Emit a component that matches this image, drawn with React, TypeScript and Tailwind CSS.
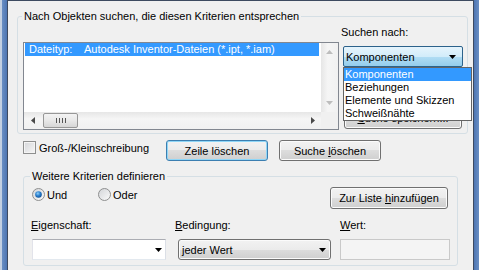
import type { ReactNode } from "react";
import clsx from "clsx";

type Dir = "up" | "down" | "left" | "right";

function Tri({ dir, color = "#000" }: { dir: Dir; color?: string }) {
  const vertical = dir === "up" || dir === "down";
  const w = vertical ? 7 : 4;
  const h = vertical ? 4 : 7;
  const points: Record<Dir, string> = {
    down: "0,0 7,0 3.5,4",
    up: "0,4 7,4 3.5,0",
    left: "4,0 4,7 0,3.5",
    right: "0,0 0,7 4,3.5",
  };
  return (
    <svg width={w} height={h} viewBox={`0 0 ${w} ${h}`} className="block">
      <polygon points={points[dir]} fill={color} />
    </svg>
  );
}

function Radio({ checked }: { checked?: boolean }) {
  return (
    <svg width="13" height="13" viewBox="0 0 13 13" className="block shrink-0">
      <defs>
        <linearGradient id="rb" x1="0" y1="0" x2="1" y2="1">
          <stop offset="0" stopColor="#d2d4d7" />
          <stop offset="1" stopColor="#fbfbfb" />
        </linearGradient>
        <radialGradient id="rd" cx="0.4" cy="0.35" r="0.7">
          <stop offset="0" stopColor="#8fd0f8" />
          <stop offset="0.5" stopColor="#2a7fcf" />
          <stop offset="1" stopColor="#0f4f93" />
        </radialGradient>
      </defs>
      <circle cx="6.5" cy="6.5" r="6" fill="url(#rb)" stroke="#8e8f8f" />
      {checked && <circle cx="6.5" cy="6.5" r="3.3" fill="url(#rd)" />}
    </svg>
  );
}

function Btn({
  children,
  className,
  focused,
}: {
  children: ReactNode;
  className?: string;
  focused?: boolean;
}) {
  return (
    <div
      className={clsx(
        "flex items-center justify-center rounded-[3px] border leading-[16px] text-black",
        "bg-[linear-gradient(to_bottom,#f2f2f2_0%,#ebebeb_50%,#dddddd_50%,#cfcfcf_100%)]",
        focused
          ? "border-[#3c7fb1] shadow-[inset_0_0_0_1px_#8fd6f7]"
          : "border-[#707070] shadow-[inset_0_0_0_1px_#fbfbfb]",
        className
      )}
    >
      {children}
    </div>
  );
}

function ListBox() {
  return (
    <div className="grid h-[88px] w-[316px] grid-cols-[297px_17px] grid-rows-[69px_17px] border border-[#828790] bg-white">
      <div className="pt-0 pl-[1px]">
        <div className="flex h-[13px] w-[294px] items-center bg-[#3399ff] pl-[4px] leading-[13px] text-white">
          <span className="w-[55px]">Dateityp:</span>
          <span>Autodesk Inventor-Dateien (*.ipt, *.iam)</span>
        </div>
      </div>
      <div className="flex flex-col items-center justify-between bg-[linear-gradient(to_right,#e6e6e6,#f5f5f5_40%,#f1f1f1)] py-[7px]">
        <Tri dir="up" color="#bdbdbd" />
        <Tri dir="down" color="#bdbdbd" />
      </div>
      <div className="flex items-center bg-[linear-gradient(to_bottom,#e6e6e6,#f5f5f5_40%,#f1f1f1)]">
        <div className="flex w-[17px] justify-center">
          <Tri dir="left" color="#4a4a4a" />
        </div>
        <div className="ml-[2px] flex h-[15px] w-[35px] items-center justify-center gap-[2px] rounded-[2px] border border-[#979797] bg-[linear-gradient(to_bottom,#f3f3f3,#e8e8e8_50%,#d6d6d6)]">
          <span className="h-[5px] w-px bg-[#555]" />
          <span className="h-[5px] w-px bg-[#555]" />
          <span className="h-[5px] w-px bg-[#555]" />
          <span className="h-[5px] w-px bg-[#555]" />
        </div>
        <div className="flex-1" />
        <div className="flex w-[17px] justify-center">
          <Tri dir="right" color="#4a4a4a" />
        </div>
      </div>
      <div className="bg-[#f0f0f0]" />
    </div>
  );
}

export default function App() {
  return (
    <div className="flex h-[270px] w-[479px] overflow-hidden bg-[#f0f0f0] text-[11px] text-black font-['Liberation_Sans',Arial,sans-serif]">
      <div className="w-[2px] bg-[#c3d0e2]" />
      <div className="w-[5px] bg-[linear-gradient(to_right,#6a8fc4,#4d75b2)]" />
      <div className="w-px bg-[#3d4a60]" />

      <div className="relative flex-1 border-t border-[#3d4a60]">
        <fieldset className="ml-[9px] mt-[7px] w-[451px] rounded-[3px] border border-[#d5dfe5] pb-[3px]">
          <legend className="ml-[4px] px-[2px] leading-[16px]">
            Nach Objekten suchen, die diesen Kriterien entsprechen
          </legend>
          <div className="flex">
            <div className="ml-[5px] mt-[18px]">
              <ListBox />
            </div>
            <div className="ml-[2px] flex flex-col">
              <div className="leading-[16px]">Suchen nach:</div>
              <div className="ml-[2px] mt-[6px] flex h-[21px] w-[120px] items-center justify-between rounded-[2px] border border-[#2c628b] bg-[linear-gradient(to_bottom,#e6f4fc_0%,#d2ecfa_50%,#b2ddf4_50%,#94cdec_100%)] pl-[2px] pr-[6px] leading-[16px]">
                <span>Komponenten</span>
                <Tri dir="down" />
              </div>
              <Btn className="ml-[3px] mt-[40px] h-[22px] w-[118px]">
                <span>
                  <span className="underline">S</span>uche speichern...
                </span>
              </Btn>
            </div>
          </div>
        </fieldset>

        <div className="mt-[6px] flex items-start">
          <div className="ml-[15px] flex w-[143px] items-start">
            <div className="mt-[1px] h-[13px] w-[13px] shrink-0 border border-[#8e8f8f] bg-[linear-gradient(135deg,#d4d6d9,#f7f7f7)] shadow-[inset_0_0_0_1px_#f4f4f4]" />
            <span className="ml-[3px] leading-[16px]">Groß-/Kleinschreibung</span>
          </div>
          <Btn focused className="h-[21px] w-[102px]">
            Zeile löschen
          </Btn>
          <Btn className="ml-[11px] h-[21px] w-[102px]">
            <span>
              Suche <span className="underline">l</span>öschen
            </span>
          </Btn>
        </div>

        <fieldset className="ml-[15px] mt-[7px] w-[435px] rounded-[3px] border border-[#d5dfe5] pb-[5px]">
          <legend className="ml-[6px] px-[2px] leading-[16px]">Weitere Kriterien definieren</legend>
          <div className="flex items-start pt-[3px]">
            <div className="ml-[8px] mt-[1px] flex">
              <div className="flex h-[13px] w-[66px] items-center">
                <Radio checked />
                <span className="ml-[2px] leading-[16px]">Und</span>
              </div>
              <div className="flex h-[13px] items-center">
                <Radio />
                <span className="ml-[2px] leading-[16px]">Oder</span>
              </div>
            </div>
            <Btn className="ml-auto mr-[9px] h-[22px] w-[118px]">
              <span>
                Zur Liste <span className="underline">h</span>inzufügen
              </span>
            </Btn>
          </div>

          <div className="mt-[8px] flex pl-[7px]">
            <div className="w-[144px]">
              <div className="leading-[16px]">
                <span className="underline">E</span>igenschaft:
              </div>
              <div className="ml-[1px] mt-[6px] flex h-[21px] w-[134px] items-center justify-end border border-[#abadb3] border-b-[#e3e9ef] border-l-[#e2e3ea] border-r-[#dbdfe6] bg-white pr-[3px]">
                <Tri dir="down" />
              </div>
            </div>
            <div className="w-[165px]">
              <div className="leading-[16px]">
                <span className="underline">B</span>edingung:
              </div>
              <Btn className="ml-[3px] mt-[6px] !justify-between h-[21px] w-[153px] pl-[3px] pr-[4px]">
                <span>jeder Wert</span>
                <Tri dir="down" />
              </Btn>
            </div>
            <div>
              <div className="leading-[16px]">
                <span className="underline">W</span>ert:
              </div>
              <div className="mt-[6px] h-[21px] w-[110px] border border-[#c9c9c9] bg-[#f4f4f4]" />
            </div>
          </div>
        </fieldset>

        <div className="absolute left-[335px] top-[66px] w-[129px] border border-[#646464] bg-white leading-[13px]">
          <div className="h-[13px] bg-[#3399ff] pl-[1px] text-white">Komponenten</div>
          <div className="h-[13px] pl-[1px]">Beziehungen</div>
          <div className="h-[13px] pl-[1px]">Elemente und Skizzen</div>
          <div className="h-[13px] pl-[1px]">Schweißnähte</div>
        </div>
      </div>

      <div className="w-px bg-[#3d4a60]" />
      <div className="w-[5px] bg-[linear-gradient(to_right,#4d75b2,#6a8fc4)]" />
    </div>
  );
}
